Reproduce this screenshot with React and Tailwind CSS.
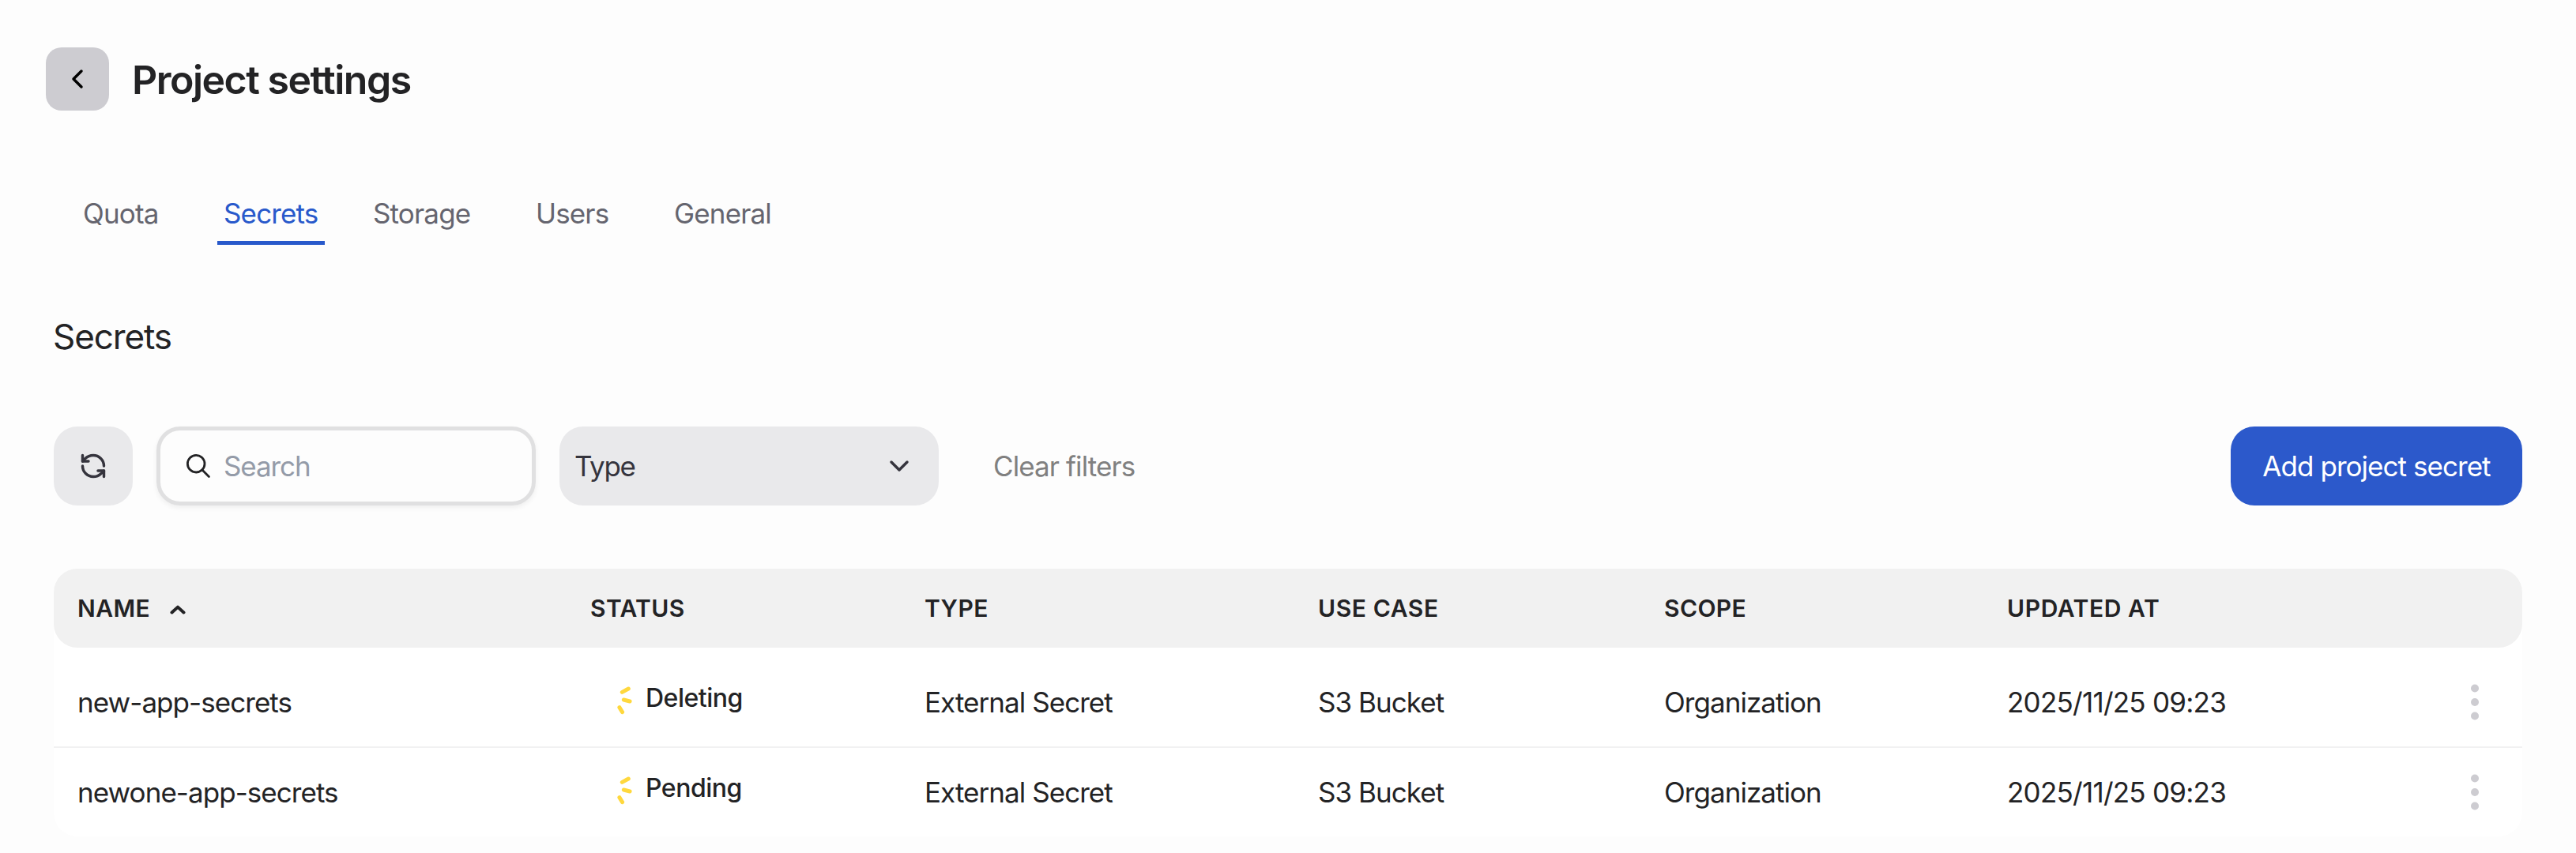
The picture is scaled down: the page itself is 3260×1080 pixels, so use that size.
import React from 'react'
import { RefreshCcw } from 'lucide-react';

const tabs = ['Quota', 'Secrets', 'Storage', 'Users', 'General'];

const secrets = [
  { name: 'new-app-secrets', status: 'Deleting', type: 'External Secret', useCase: 'S3 Bucket', scope: 'Organization', updatedAt: '2025/11/25 09:23' },
  { name: 'newone-app-secrets', status: 'Pending', type: 'External Secret', useCase: 'S3 Bucket', scope: 'Organization', updatedAt: '2025/11/25 09:23' },
];

const Chevron = ({ d, className }) => (
  <svg viewBox="0 0 24 24" fill="none" stroke="currentColor" strokeWidth="2.6" strokeLinecap="round" strokeLinejoin="round" className={className}>
    <path d={d} />
  </svg>
);

const SearchIcon = () => (
  <svg viewBox="0 0 30 30" fill="none" stroke="#232325" strokeWidth="2.8" strokeLinecap="round" className="size-[30px] shrink-0">
    <circle cx="12.2" cy="12.2" r="10.8" />
    <path d="M20 20l8.4 8.4" />
  </svg>
);

const Spinner = () => (
  <svg viewBox="0 0 20 38" fill="none" stroke="#ffd83d" strokeWidth="5" strokeLinecap="round" className="h-[38px] w-5 shrink-0">
    <path d="M7.3 8.4L15.3 4M9.3 18l7.8 2M3.9 27.6l3.7 6" />
  </svg>
);

const MoreIcon = () => (
  <svg viewBox="0 0 10 46" fill="#cdccd1" className="h-[46px] w-2.5">
    <circle cx="5" cy="5.5" r="5" />
    <circle cx="5" cy="23" r="5" />
    <circle cx="5" cy="40.5" r="5" />
  </svg>
);

const App = () => {
  return (
    <div className="h-[1080px] w-[3260px] overflow-hidden bg-[#fdfdfd] pt-[60px] font-['Inter',sans-serif] text-[35px] leading-10 font-normal tracking-[-0.95px] text-[#232325]">
      <header className="flex h-20 items-center gap-[29px] pl-[58px]">
        <button className="flex size-20 items-center justify-center rounded-[20px] bg-[#cdccd1] text-black">
          <Chevron d="M15.75 19.5L8.25 12l7.5-7.5" className="size-8" />
        </button>
        <h1 className="pt-0.5 text-[50px] leading-[60px] font-semibold tracking-[-1.5px]">Project settings</h1>
      </header>

      <nav className="mt-[110px] ml-[97px] grid grid-cols-[178px_189px_206px_175px_auto] justify-start tracking-[-0.85px] text-[#65656f]">
        {tabs.map((tab) => (
          <a key={tab} className="flex">
            {tab === 'Secrets' ? (
              <span className="border-b-[5px] border-[#2859cb] px-2 pb-[15px] text-[#2859cb]">{tab}</span>
            ) : (
              <span className="px-2">{tab}</span>
            )}
          </a>
        ))}
      </nav>

      <main className="mx-[68px]">
        <h2 className="mt-[86px] -ml-px text-[44px] leading-[60px] tracking-[-1.1px]">Secrets</h2>

        <div className="mt-[84px] flex h-[100px] items-stretch">
          <button className="flex w-[100px] items-center justify-center rounded-[30px] bg-[#e9e9eb] text-[#35343d]">
            <RefreshCcw size={36} strokeWidth={2.3} />
          </button>
          <label className="ml-[30px] flex w-[480px] items-center rounded-[30px] border-[5px] border-[#e0e0e1] pl-[33px] shadow-[0_3px_6px_rgba(0,0,0,0.06)]">
            <SearchIcon />
            <input
              type="text"
              placeholder="Search"
              className="ml-[17px] w-[300px] tracking-[-1.1px] outline-none placeholder:text-[#949ba8]"
            />
          </label>
          <button className="ml-[30px] flex w-[480px] items-center justify-between rounded-[30px] bg-[#e9e9eb] pr-[34px] pl-[19px] tracking-[-1.3px] text-[#35343d]">
            Type
            <Chevron d="M19.5 8.25l-7.5 7.5-7.5-7.5" className="size-8" />
          </button>
          <button className="ml-[69px] tracking-[-0.9px] text-[#808080]">Clear filters</button>
          <button className="ml-auto w-[369px] rounded-[30px] bg-[#2c59cb] tracking-[-0.95px] text-white">
            Add project secret
          </button>
        </div>

        <div className="mt-20 h-[339px] rounded-[30px] bg-white">
          <div className="grid h-[100px] grid-cols-[650px_422px_498px_438px_434px_1fr] items-center rounded-[30px] bg-[#f1f1f1] pl-[30px] text-[30px] font-semibold tracking-[0.4px]">
            <div className="flex items-center">
              NAME
              <svg viewBox="0 0 20 12" fill="none" stroke="currentColor" strokeWidth="4" strokeLinecap="round" strokeLinejoin="round" className="mt-[3px] ml-[25px] h-3 w-5">
                <path d="M2.5 9.5L10 2.6l7.5 6.9" />
              </svg>
            </div>
            <div className="-ml-px">STATUS</div>
            <div>TYPE</div>
            <div className="tracking-[0.6px]">USE CASE</div>
            <div>SCOPE</div>
            <div className="tracking-[0.6px]">UPDATED AT</div>
          </div>
          <div className="mt-[13px]">
            {secrets.map((secret) => (
              <div key={secret.name} className="grid h-[114px] grid-cols-[650px_422px_498px_438px_434px_1fr] items-center border-b-2 border-[#f1f1f2] pl-[30px] last:border-transparent">
                <div>{secret.name}</div>
                <div className="mb-[11px] flex items-center pl-8 text-[32px] font-medium tracking-[-0.5px]">
                  <div className="pt-1.5">
                    <Spinner />
                  </div>
                  <span className="ml-[17px]">{secret.status}</span>
                </div>
                <div>{secret.type}</div>
                <div>{secret.useCase}</div>
                <div>{secret.scope}</div>
                <div className="flex items-center justify-between pr-[55px] tracking-[-0.75px]">
                  {secret.updatedAt}
                  <MoreIcon />
                </div>
              </div>
            ))}
          </div>
        </div>
      </main>
    </div>
  );
}

export default App;
